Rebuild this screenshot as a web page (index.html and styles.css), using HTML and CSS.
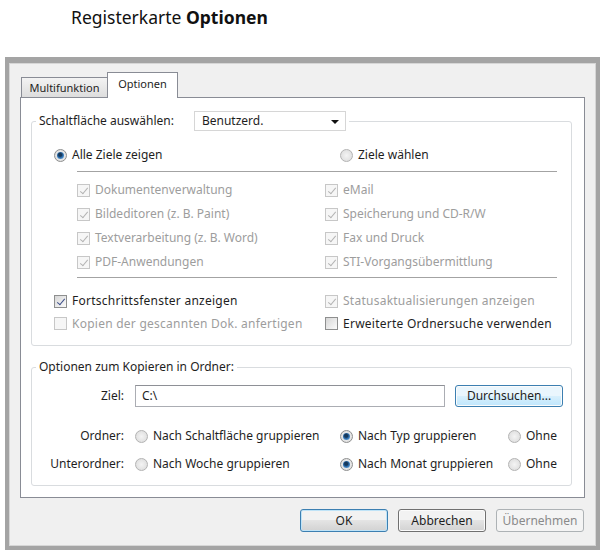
FILE: index.html
```html
<!DOCTYPE html>
<html lang="de">
<head>
  <meta charset="UTF-8">
  <meta name="viewport" content="width=device-width, initial-scale=1.0">
  <title>Registerkarte Optionen</title>
  <link rel="stylesheet" href="styles.css">
</head>
<body>
  <div class="caption">Registerkarte <b>Optionen</b></div>

  <div class="window">
    <div class="tabs">
      <div class="tab">Multifunktion</div>
      <div class="tab active">Optionen</div>
    </div>

    <div class="panel">
      <!-- Zielauswahl -->
      <fieldset class="group targets">
        <legend><span class="legend-row">
          <span>Schaltfläche auswählen:</span>
          <span class="select">Benutzerd.<span class="caret"></span></span>
        </span></legend>

        <div class="radio-row">
          <span class="opt"><span class="radio on"></span>Alle Ziele zeigen</span>
          <span class="opt pick"><span class="radio"></span>Ziele wählen</span>
        </div>
        <hr class="rule">
        <div class="checks">
          <span class="opt dim"><span class="box dim tick"></span>Dokumentenverwaltung</span>
          <span class="opt dim"><span class="box dim tick"></span>eMail</span>
          <span class="opt dim"><span class="box dim tick"></span>Bildeditoren (z. B. Paint)</span>
          <span class="opt dim"><span class="box dim tick"></span>Speicherung und CD-R/W</span>
          <span class="opt dim"><span class="box dim tick"></span>Textverarbeitung (z. B. Word)</span>
          <span class="opt dim"><span class="box dim tick"></span>Fax und Druck</span>
          <span class="opt dim"><span class="box dim tick"></span>PDF-Anwendungen</span>
          <span class="opt dim"><span class="box dim tick"></span>STI-Vorgangsübermittlung</span>
        </div>
        <hr class="rule rule-low">
        <div class="settings">
          <span class="opt"><span class="box tick"></span>Fortschrittsfenster anzeigen</span>
          <span class="opt dim"><span class="box dim tick"></span>Statusaktualisierungen anzeigen</span>
          <span class="opt dim"><span class="box dim"></span>Kopien der gescannten Dok. anfertigen</span>
          <span class="opt"><span class="box"></span>Erweiterte Ordnersuche verwenden</span>
        </div>
      </fieldset>

      <!-- Kopieren in Ordner -->
      <fieldset class="group copy">
        <legend>Optionen zum Kopieren in Ordner:</legend>
        <div class="dest">
          <span class="field-label">Ziel:</span>
          <span class="textbox">C:\</span>
          <span class="btn hot">Durchsuchen...</span>
        </div>
        <div class="sort">
          <span class="field-label">Ordner:</span>
          <span class="opt"><span class="radio"></span>Nach Schaltfläche gruppieren</span>
          <span class="opt"><span class="radio on"></span>Nach Typ gruppieren</span>
          <span class="opt"><span class="radio"></span>Ohne</span>

          <span class="field-label">Unterordner:</span>
          <span class="opt"><span class="radio"></span>Nach Woche gruppieren</span>
          <span class="opt"><span class="radio on"></span>Nach Monat gruppieren</span>
          <span class="opt"><span class="radio"></span>Ohne</span>
        </div>
      </fieldset>
    </div>

    <div class="actions">
      <span class="btn default">OK</span>
      <span class="btn">Abbrechen</span>
      <span class="btn disabled">Übernehmen</span>
    </div>
  </div>
</body>
</html>
```

FILE: styles.css
```css
body {
  margin: 0;
  background: #fff;
  color: #1e1e1e;
  font: 12px/16px "Noto Sans", "DejaVu Sans", sans-serif;
}

.caption {
  box-sizing: border-box;
  height: 28px;
  padding: 6px 0 0 71px;
  font-size: 17.5px;
  line-height: 22px;
  color: #111;
}

/** Dialog window **/

.window {
  box-sizing: border-box;
  display: flex;
  flex-direction: column;
  width: 595px;
  height: 493px;
  margin: 29px 0 0 5px;
  padding: 9px 11px 0;
  border: 4px solid #a4a4a4;
  border-top-width: 6px;
  background: #f0f0f0;
  box-shadow: inset 0 0 0 1px #d6d6d6;
}

.tabs {
  position: relative;
  z-index: 1;
  display: flex;
  align-items: flex-end;
  height: 26px;
  margin-bottom: -1px;
  padding-left: 1px;
}

.tab {
  box-sizing: border-box;
  width: 87px;
  height: 20px;
  margin-bottom: 1px;
  border: 1px solid #898c95;
  border-bottom: 0;
  background: linear-gradient(#f3f3f3, #dddddd);
  font-size: 11px;
  line-height: 19px;
  text-align: center;
}

.tab.active {
  width: 71px;
  height: 26px;
  margin: 0 0 0 -1px;
  background: #fff;
  line-height: 22px;
}

.panel {
  box-sizing: border-box;
  height: 401px;
  padding: 13px 12px 0 10px;
  border: 1px solid #898c95;
  background: #fff;
}

/** Group boxes **/

.group {
  min-width: 0;
  margin: 0;
  padding: 0 14px 10px 0;
  border: 1px solid #d9dcdf;
  border-radius: 3px;
}

.group legend {
  margin-left: 4px;
  padding: 0 3px;
}

.legend-row {
  display: inline-flex;
  align-items: center;
  height: 20px;
}

.select {
  box-sizing: border-box;
  display: flex;
  align-items: center;
  width: 152px;
  height: 20px;
  margin-left: 20px;
  padding-left: 7px;
  border: 1px solid #d6d6d6;
  background: #fff;
}

.caret {
  width: 0;
  height: 0;
  margin: 1px 6px 0 auto;
  border-left: 4px solid transparent;
  border-right: 4px solid transparent;
  border-top: 4px solid #111;
}

.radio-row {
  display: grid;
  grid-template-columns: 271px 1fr;
  align-items: center;
  height: 20px;
  margin-top: 14px;
  padding-left: 22px;
}

.radio-row .pick {
  margin-left: 15px;
}

.rule {
  height: 0;
  margin: 6px 0 0 45px;
  border: 0;
  border-top: 1px solid #a3a3a3;
}

.rule-low {
  margin-top: 3px;
}

.checks {
  display: grid;
  grid-template-columns: 248px 1fr;
  grid-auto-rows: 24px;
  align-items: center;
  padding: 6px 0 0 45px;
}

.settings {
  display: grid;
  grid-template-columns: 271px 1fr;
  grid-template-rows: 22px 23px;
  align-items: center;
  margin-top: 12px;
  padding-left: 22px;
  letter-spacing: 0.25px;
}

.copy {
  margin-top: 13px;
  padding: 0 0 7px;
}

.copy legend {
  line-height: 16px;
}

.dest {
  display: flex;
  align-items: center;
  height: 22px;
  margin-top: 10px;
}

.dest > * {
  flex: none;
}

.field-label {
  width: 92px;
  margin-right: 11px;
  text-align: right;
}

.textbox {
  box-sizing: border-box;
  width: 310px;
  height: 22px;
  padding-left: 6px;
  border: 1px solid #abadb3;
  border-top-color: #8e9096;
  line-height: 20px;
}

.dest .btn {
  width: 108px;
  height: 22px;
  margin-left: 10px;
}

.sort {
  display: grid;
  grid-template-columns: 92px 194px 157px 1fr;
  grid-auto-rows: 28px;
  column-gap: 11px;
  align-items: center;
  margin-top: 15px;
}

.sort .field-label {
  margin-right: 0;
}

/** Controls **/

.opt {
  display: flex;
  align-items: center;
  gap: 5px;
  white-space: nowrap;
}

.opt.dim {
  color: #9d9d9d;
}

.radio {
  position: relative;
  box-sizing: border-box;
  flex: none;
  width: 13px;
  height: 13px;
  border: 1px solid #b3b3b3;
  border-radius: 50%;
  background: radial-gradient(circle, #f4f4f4, #d9d9d9);
}

.radio.on {
  border-color: #8e8f8f;
}

.radio.on::after {
  content: "";
  position: absolute;
  inset: 2px;
  border-radius: 50%;
  background: radial-gradient(circle at 45% 40%, #16385a 0 1.5px, #2f73b4 3px, #8dbde6);
}

.box {
  position: relative;
  box-sizing: border-box;
  flex: none;
  width: 13px;
  height: 13px;
  border: 1px solid #8e8f8f;
  background: linear-gradient(135deg, #d6d6d6, #fbfbfb);
}

.box.dim {
  border-color: #c7c7c7;
  background: #f6f6f6;
}

.box.tick::after {
  content: "";
  position: absolute;
  left: 4px;
  top: 1px;
  width: 3px;
  height: 7px;
  border: solid #3d4f8a;
  border-width: 0 1.5px 1.5px 0;
  transform: rotate(40deg);
}

.box.dim.tick::after {
  border-color: #b3b3b3;
}

/** Buttons **/

.actions {
  display: flex;
  justify-content: flex-end;
  gap: 10px;
  margin-top: 11px;
  padding-right: 1px;
}

.btn {
  box-sizing: border-box;
  display: flex;
  align-items: center;
  justify-content: center;
  width: 88px;
  height: 23px;
  border: 1px solid #707070;
  border-radius: 3px;
  background: linear-gradient(#f2f2f2 0 50%, #e4e4e4 50%, #d2d2d2);
  box-shadow: inset 0 0 0 1px #fbfbfb;
  white-space: nowrap;
}

.btn.default {
  border-color: #3c7fb1;
  box-shadow: inset 0 0 0 1px #bfe3f7;
}

.btn.hot {
  border-color: #3c7fb1;
  background: linear-gradient(#eaf6fd 0 50%, #d9f0fc 50%, #bee6fd);
}

.btn.disabled {
  border-color: #adb2b5;
  background: #f4f4f4;
  box-shadow: none;
  color: #8a8a8a;
}
```
